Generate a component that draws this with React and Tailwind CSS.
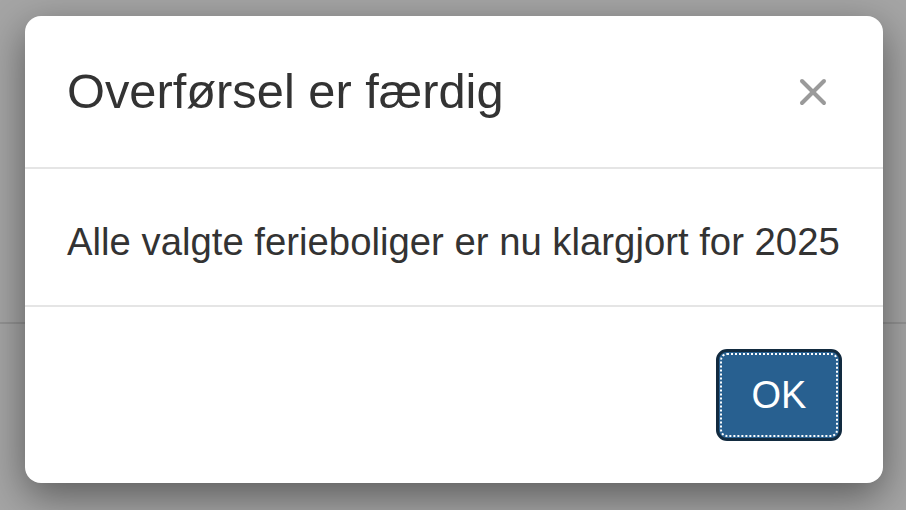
import React from 'react';

export default function App() {
  return (
    <div className="relative w-[906px] h-[510px] overflow-hidden bg-[#a5a5a5] font-['Liberation_Sans',Arial,sans-serif]">
      {/* page behind the backdrop */}
      <div className="h-[324px] border-b-2 border-[#939393]"></div>

      {/* modal */}
      <div className="absolute inset-0 pl-[25px] pr-[23px] pt-[16px]">
        <div className="bg-white rounded-[16px] shadow-[0_13px_40px_rgba(0,0,0,0.45)] overflow-hidden">
          <div className="flex items-center justify-between px-[42px] py-[41px] border-b-2 border-[#e5e5e5]">
            <h4 className="text-[48.8px] leading-[69px] text-[#333333]">Overførsel er færdig</h4>
            <button className="mr-[14px] w-[28px] h-[28px] flex items-center justify-center">
              <svg width="28" height="28" viewBox="0 0 28 28" fill="none" stroke="#9a9a9a" strokeWidth="4" strokeLinecap="round">
                <line x1="3" y1="3" x2="25" y2="25" />
                <line x1="25" y1="3" x2="3" y2="25" />
              </svg>
            </button>
          </div>

          <div className="pl-[42px] pr-[30px] pt-[46px] pb-[36px] border-b-2 border-[#e5e5e5]">
            <p className="whitespace-nowrap text-[38.3px] leading-[54px] text-[#333333]">Alle valgte ferieboliger er nu klargjort for 2025</p>
          </div>

          <div className="flex justify-end pt-[42px] pb-[42px] pr-[41px]">
            <button className="w-[126px] h-[92px] rounded-[11px] bg-[#286090] border-[3px] border-[#122b40] text-white text-[38px] outline-2 outline-dotted outline-white outline-offset-[-6px]">
              OK
            </button>
          </div>
        </div>
      </div>
    </div>
  );
}
